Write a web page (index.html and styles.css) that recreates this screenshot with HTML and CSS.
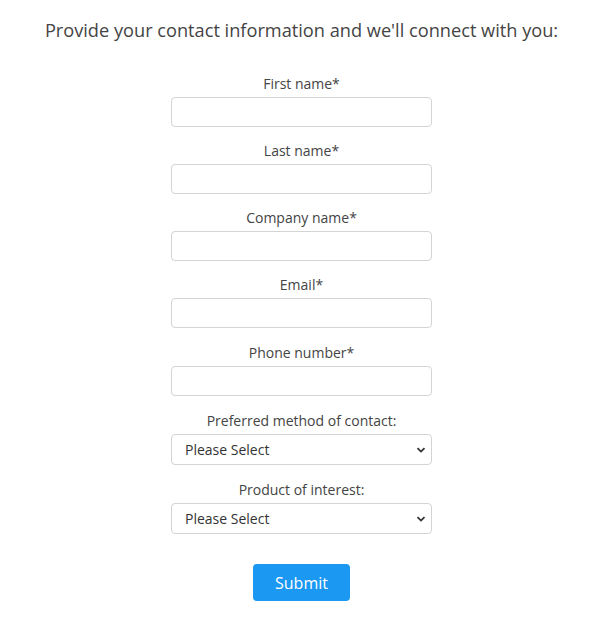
FILE: index.html
```html
<!DOCTYPE html>
<html>
<head>
<meta charset="utf-8">
<link rel="stylesheet" href="styles.css">
</head>
<body>
<div class="page">
  <h1 class="title">Provide your contact information and we'll connect with you:</h1>
  <form class="form">
    <div class="field">
      <label class="label">First name*</label>
      <input class="control" type="text">
    </div>
    <div class="field">
      <label class="label">Last name*</label>
      <input class="control" type="text">
    </div>
    <div class="field">
      <label class="label">Company name*</label>
      <input class="control" type="text">
    </div>
    <div class="field field-loose">
      <label class="label">Email*</label>
      <input class="control" type="text">
    </div>
    <div class="field field-loose">
      <label class="label">Phone number*</label>
      <input class="control" type="text">
    </div>
    <div class="field field-loose">
      <label class="label">Preferred method of contact:</label>
      <div class="select">
        <span class="select-text">Please Select</span>
        <svg class="chevron" width="10" height="6" viewBox="0 0 10 6"><path d="M1.5 1.2 L5 4.6 L8.5 1.2" fill="none" stroke="#333" stroke-width="1.8"/></svg>
      </div>
    </div>
    <div class="field">
      <label class="label">Product of interest:</label>
      <div class="select">
        <span class="select-text">Please Select</span>
        <svg class="chevron" width="10" height="6" viewBox="0 0 10 6"><path d="M1.5 1.2 L5 4.6 L8.5 1.2" fill="none" stroke="#333" stroke-width="1.8"/></svg>
      </div>
    </div>
    <div class="actions">
      <button class="submit" type="button">Submit</button>
    </div>
  </form>
</div>
</body>
</html>
```
FILE: styles.css
```css
html, body {
  margin: 0;
  padding: 0;
  background: #fff;
}
body {
  font-family: "Open Sans", "Noto Sans", sans-serif;
  color: #444;
}
.page {
  display: flex;
  flex-direction: column;
  align-items: center;
  padding-top: 16px;
  padding-right: 2px;
}
.title {
  margin: 0;
  font-size: 18.2px;
  font-weight: 400;
  line-height: 28px;
  color: #444;
  text-align: center;
}
.form {
  display: flex;
  flex-direction: column;
  align-items: center;
  margin-top: 30px;
  width: 261px;
}
.field {
  display: flex;
  flex-direction: column;
  align-items: center;
  width: 100%;
  margin-bottom: 14px;
}
.field-loose {
  margin-bottom: 15px;
}
.label {
  font-size: 14px;
  line-height: 20px;
  color: #444;
  margin-bottom: 3px;
}
.control {
  box-sizing: border-box;
  width: 261px;
  height: 30px;
  border: 1px solid #d4d4d4;
  border-radius: 4px;
  background: #fff;
  margin: 0;
  padding: 0 12px;
}
.select {
  box-sizing: border-box;
  width: 261px;
  height: 31px;
  border: 1px solid #d4d4d4;
  border-radius: 4px;
  background: #fff;
  display: flex;
  align-items: center;
  justify-content: space-between;
  padding: 0 5px 0 13px;
}
.select-text {
  font-size: 14px;
  color: #333;
}
.chevron {
  display: block;
}
.actions {
  margin-top: 16px;
}
.submit {
  width: 97px;
  height: 37px;
  border: none;
  border-radius: 4px;
  background: #1a98f2;
  color: #fff;
  font-family: "Open Sans", "Noto Sans", sans-serif;
  font-size: 16px;
  padding: 0;
}
```
